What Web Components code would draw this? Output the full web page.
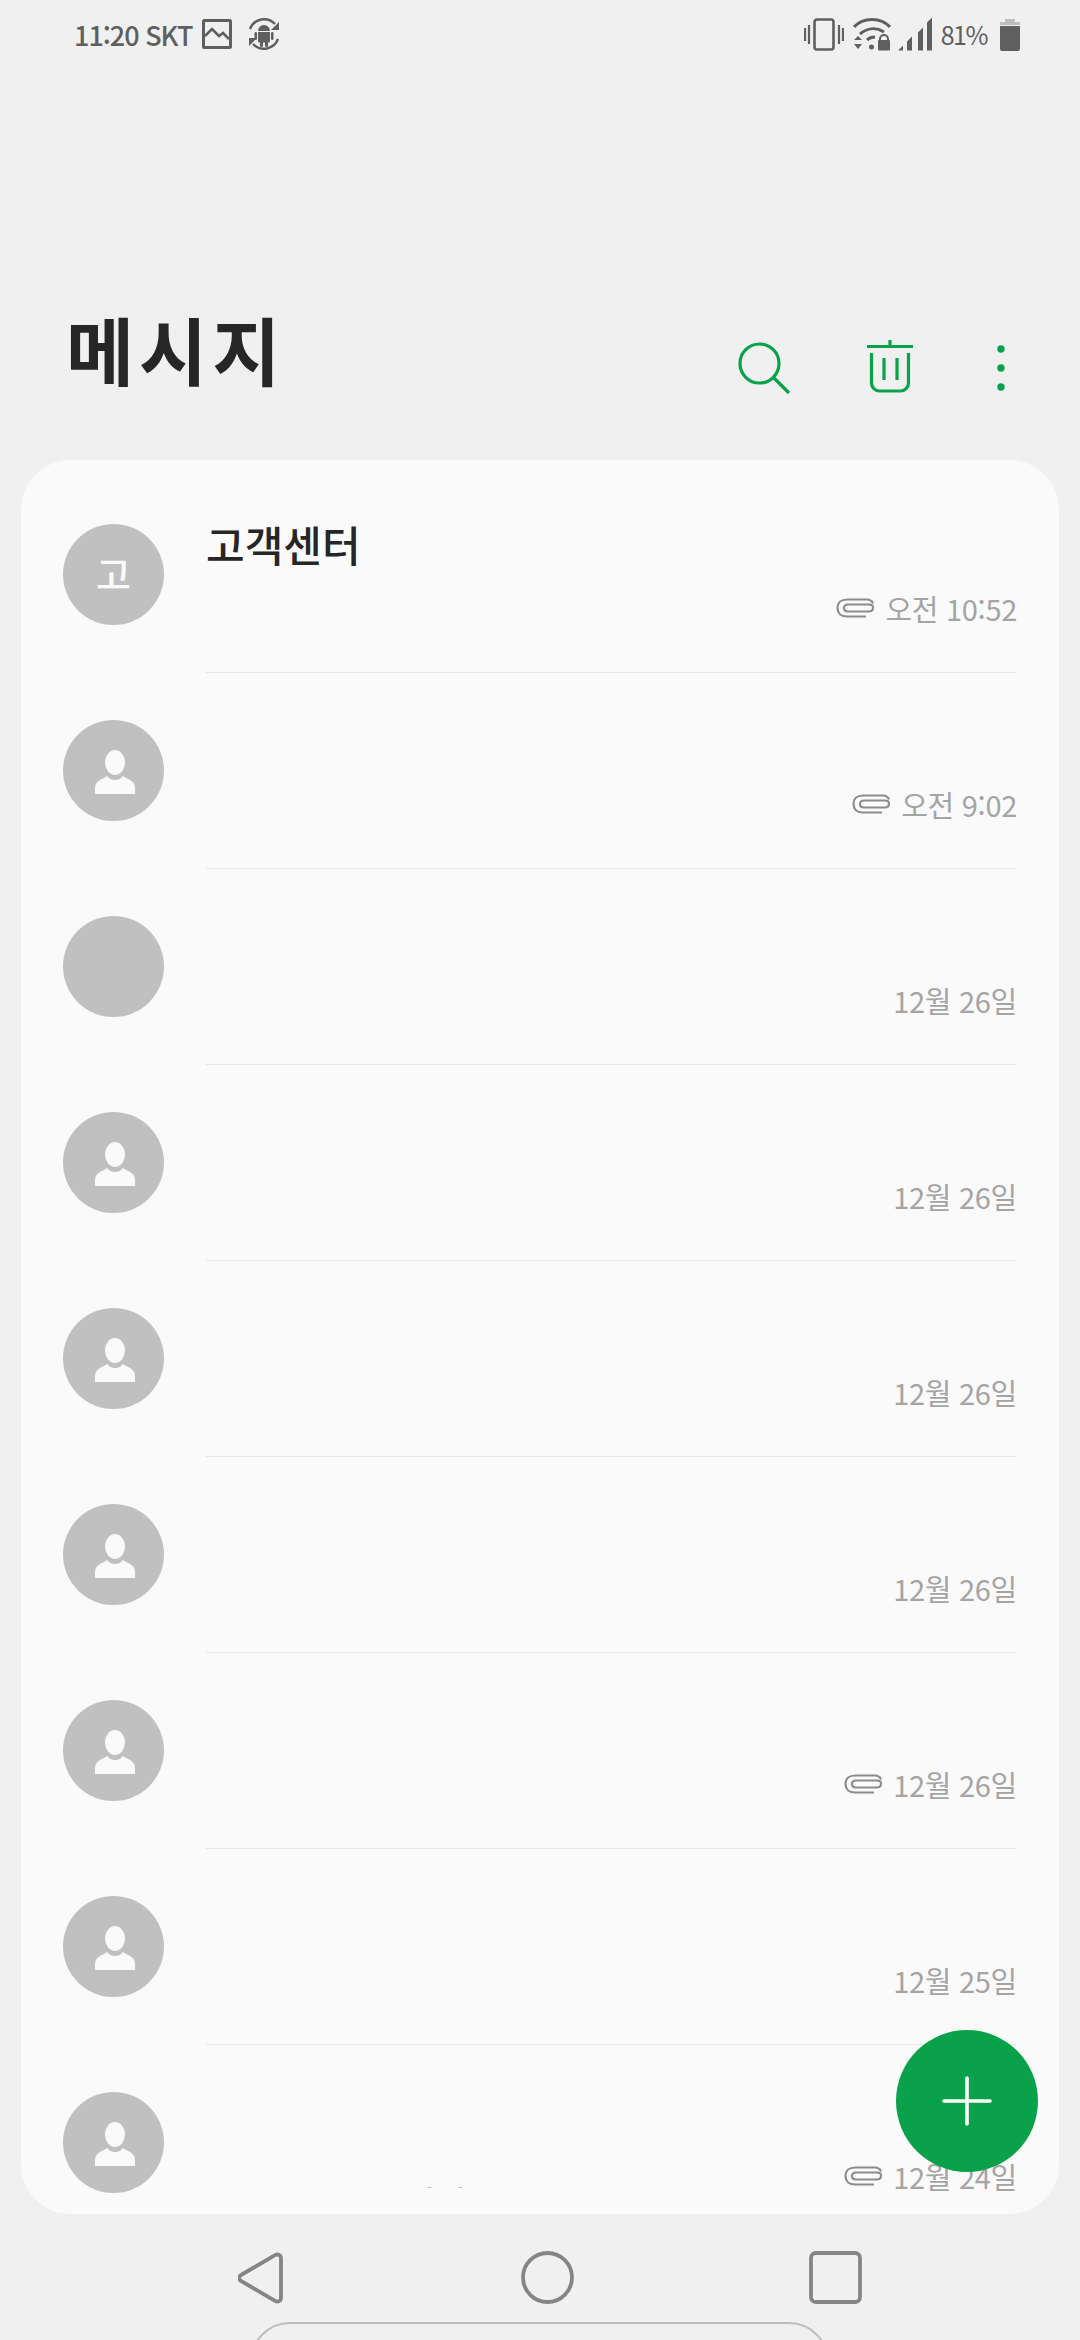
<!DOCTYPE html>
<html lang="ko"><head><meta charset="utf-8"><title>메시지</title>
<style>
html,body{margin:0;padding:0;background:#f0f0f0;}
body{font-family:"Noto Sans CJK KR","Noto Sans",sans-serif;}
</style></head><body>
<x-app>
  <x-status></x-status>
  <x-head></x-head>
  <x-card>
    <x-row avatar="letter" letter="고" name="고객센터" time="오전 10:52" clip></x-row>
    <x-row avatar="person" time="오전 9:02" clip></x-row>
    <x-row avatar="blank" time="12월 26일"></x-row>
    <x-row avatar="person" time="12월 26일"></x-row>
    <x-row avatar="person" time="12월 26일"></x-row>
    <x-row avatar="person" time="12월 26일"></x-row>
    <x-row avatar="person" time="12월 26일" clip></x-row>
    <x-row avatar="person" time="12월 25일"></x-row>
    <x-row avatar="person" time="12월 24일" clip></x-row>
  </x-card>
  <x-nav></x-nav>
  <x-fab></x-fab>
</x-app>
<script>
const FONT='"Noto Sans CJK KR","Noto Sans",sans-serif';
function def(name,html){
  customElements.define(name,class extends HTMLElement{
    connectedCallback(){
      if(this.shadowRoot)return;
      this.attachShadow({mode:'open'}).innerHTML=typeof html==='function'?html(this):html;
    }
  });
}
def('x-app',`<style>:host{display:block;position:relative;width:1080px;height:2340px;overflow:hidden;background:#f0f0f0;font-family:${FONT}}</style><slot></slot>`);

def('x-status',`<style>
:host{display:flex;align-items:center;justify-content:space-between;height:68px;padding:0 59px 0 74px;color:#5f5f5f;font-size:27px;box-sizing:border-box}
.g{display:flex;align-items:center}
svg{display:block;fill:none}
.t{line-height:1;font-weight:500;letter-spacing:-1px;white-space:nowrap}
</style>
<div class="g">
 <span class="t">11:20 SKT</span>
 <svg style="margin-left:10px" width="30" height="30" viewBox="0 0 30 30"><rect x="1.5" y="1.5" width="27" height="27" rx="1" stroke="#5f5f5f" stroke-width="3"/><path d="M3 17l7-7 7 7 4-3 6 6" stroke="#5f5f5f" stroke-width="2.6"/></svg>
 <svg style="margin-left:15px" width="34" height="34" viewBox="0 0 34 34"><path d="M3 12A15 15 0 0 1 28 7M31 22A15 15 0 0 1 6 27" stroke="#5f5f5f" stroke-width="2.4"/><path d="M32 5v8h-8zM2 29v-8h8z" fill="#5f5f5f"/><path d="M11 14a5.500 5.500 0 0 1 12 0zM11 15h12v9a1.500 1.500 0 0 1-1.500 1.500H21v3a1.500 1.500 0 0 1-3 0v-3h-2v3a1.500 1.500 0 0 1-3 0v-3h-.5A1.500 1.500 0 0 1 11 24z" fill="#5f5f5f"/><rect x="7.500" y="15" width="2.500" height="8" rx="1.200" fill="#5f5f5f"/><rect x="24" y="15" width="2.500" height="8" rx="1.200" fill="#5f5f5f"/></svg>
</div>
<div class="g">
 <svg width="40" height="33" viewBox="0 0 40 33"><rect x="10.500" y="1.500" width="19" height="30" rx="2.500" stroke="#5f5f5f" stroke-width="2.600"/><path d="M1 10v13M5 7v19M35 7v19M39 10v13" stroke="#5f5f5f" stroke-width="2.200"/></svg>
 <svg style="margin-left:9px" width="38" height="33" viewBox="0 0 38 33"><path d="M1 9C10-1 28-1 37 9M7 16c7-6 16-7 24-2M14 22c2-2 5-3 8-3" stroke="#5f5f5f" stroke-width="3"/><circle cx="18.500" cy="29" r="2.500" fill="#5f5f5f"/><path d="M1 22l4-4 4 4zM1 26h8l-4 5z" fill="#5f5f5f"/><path d="M27 23v-2a4 4 0 0 1 8 0v2" stroke="#5f5f5f" stroke-width="2"/><rect x="25" y="22" width="12" height="10.500" rx="1" fill="#5f5f5f"/></svg>
 <svg style="margin-left:7px" width="34" height="33" viewBox="0 0 34 33"><path d="M0 32.500l5-5v5zM9 32.500v-9l5-5v14zM20 32.500v-18l5-5v23zM29 32.500v-28l5-5v33z" fill="#5f5f5f"/></svg>
 <span class="t" style="margin-left:9px;font-weight:400;font-size:25px;letter-spacing:-1.500px">81%</span>
 <svg style="margin-left:12px" width="22" height="33" viewBox="0 0 22 33"><path d="M6 1h10v3H6z" fill="#bdbdbd"/><path d="M1 4h20v3H1z" fill="#bdbdbd"/><path d="M1 8h20v23a2 2 0 0 1-2 2H3a2 2 0 0 1-2-2z" fill="#5f5f5f"/></svg>
</div>`);

def('x-head',`<style>
:host{display:flex;justify-content:space-between;align-items:flex-start;height:392px;box-sizing:border-box;padding:246px 0 0 66px}
h1{margin:0;font:700 74px/1 ${FONT};color:#262626;letter-spacing:5px;white-space:nowrap;position:relative;top:-3px}
.a{display:flex;align-items:flex-start;margin-top:24px;padding-right:75px}
svg{display:block;fill:none}
</style>
<h1>메시지</h1>
<div class="a">
 <svg style="margin-top:3px" width="54" height="54" viewBox="0 0 54 54"><circle cx="22.500" cy="22.500" r="19.500" stroke="#09a14a" stroke-width="3.200"/><path d="M36.500 36.500L52 52" stroke="#09a14a" stroke-width="3.200"/></svg>
 <svg style="margin:1px 0 0 75px" width="48" height="55" viewBox="0 0 48 55"><path d="M1 7.500h46M24 1v6" stroke="#09a14a" stroke-width="3.200"/><path d="M5.500 14v30a8 8 0 0 0 8 8h21a8 8 0 0 0 8-8V14M18 19v22M31 19v22" stroke="#09a14a" stroke-width="3.200"/></svg>
 <svg style="margin:7px 0 0 83px" width="8" height="46" viewBox="0 0 8 46"><circle cx="4" cy="4" r="3.700" fill="#09a14a"/><circle cx="4" cy="23" r="3.700" fill="#09a14a"/><circle cx="4" cy="42" r="3.700" fill="#09a14a"/></svg>
</div>`);

def('x-card',`<style>
:host{display:block;position:relative;margin:0 21px;height:1754px;background:#fafafa;border-radius:50px;overflow:hidden;padding-top:17px;box-sizing:border-box}
i{position:absolute;display:block;height:1px;width:3px;background:#b5b5b5;top:1727px}
</style><slot></slot><i style="left:407px"></i><i style="left:438px"></i>`);

def('x-row',el=>{
  const av=el.getAttribute('avatar'),name=el.getAttribute('name')||'',time=el.getAttribute('time')||'',clip=el.hasAttribute('clip'),letter=el.getAttribute('letter')||'';
  const inner=av==='letter'?`<span class="l">${letter}</span>`:av==='person'?`<svg width="100" height="100" viewBox="0 0 100 100"><ellipse cx="51" cy="41.500" rx="10" ry="12.500" fill="#fafafa"/><path d="M31 73v-6c0-4 2-6 5-8l7.500-4c1 2.500 4 4 7.500 4s6.500-1.500 7.500-4l7.500 4c3 2 5 4 5 8v6z" fill="#fafafa"/></svg>`:'';
  return `<style>
:host{display:flex;height:196px;padding:0 42px;box-sizing:border-box;align-items:stretch}
.av{flex:none;width:101px;height:101px;border-radius:50%;background:#c0c0c0;margin:47px 42px 0 0;display:flex;align-items:center;justify-content:center}
.l{color:#fafafa;font-size:38px;line-height:1;font-weight:500;margin-bottom:4px}
svg{display:block;fill:none}
.b{flex:1;border-bottom:1.500px solid #e6e6e6;display:flex;flex-direction:column;box-sizing:border-box;position:relative}
.n{height:52px;margin-top:41px;font-size:42px;line-height:52px;color:#262626;font-weight:500;white-space:nowrap}
.t{display:flex;justify-content:flex-end;align-items:center;margin-top:18px;gap:11px;color:#a4a4a4;font-size:29px;line-height:40px;letter-spacing:-.3px;white-space:nowrap}
</style>
<div class="av">${inner}</div>
<div class="b"><div class="n">${name}</div>
<div class="t">${clip?`<svg width="38" height="20" viewBox="0 0 38 20"><path d="M37 5.500C36 3 34 1.500 31 1.500H11C5 1.500 1.500 5 1.500 10S5 18.500 11 18.500h19M11 13.500h22c2.500 0 4-1.500 4-4s-1.500-3-4-3H12C9.500 6.500 8 8 8 10s1.500 3.500 4 3.500" stroke="#8c8c8c" stroke-width="2.200"/></svg>`:''}<span>${time}</span></div></div>`;
});

def('x-fab',`<style>
:host{position:absolute;left:896px;top:2030px;width:142px;height:142px;border-radius:50%;background:#09a14a;display:flex;align-items:center;justify-content:center}
svg{display:block}
</style><svg width="50" height="50" viewBox="0 0 50 50"><path d="M2 25h46M25 2v46" stroke="#fff" stroke-width="3.600" stroke-linecap="round"/></svg>`);

def('x-nav',`<style>
:host{display:block;height:126px;overflow:hidden;box-sizing:border-box;padding-top:37px}
.r{display:flex;padding-left:238px;align-items:center}
svg{display:block;fill:none}
.o{width:579px;height:80px;margin:18px 0 0 250px;box-sizing:border-box;border:2px solid #bdbdbd;border-radius:40px}
</style>
<div class="r">
 <svg width="46" height="52" viewBox="0 0 46 52"><path d="M3 23L37 3.200C40 1.500 43 3 43 6.500v39c0 3.500-3 5-6 3.300L3 29c-2.500-1.700-2.500-4.300 0-6z" stroke="#858585" stroke-width="3.800"/></svg>
 <svg style="margin-left:237px" width="53" height="53" viewBox="0 0 53 53"><circle cx="26.500" cy="26.500" r="24.500" stroke="#858585" stroke-width="3.800"/></svg>
 <svg style="margin-left:235px" width="53" height="53" viewBox="0 0 53 53"><rect x="2" y="2" width="49" height="49" rx="5" stroke="#858585" stroke-width="3.800"/></svg>
</div>
<div class="o"></div>`);
</script>
</body></html>
